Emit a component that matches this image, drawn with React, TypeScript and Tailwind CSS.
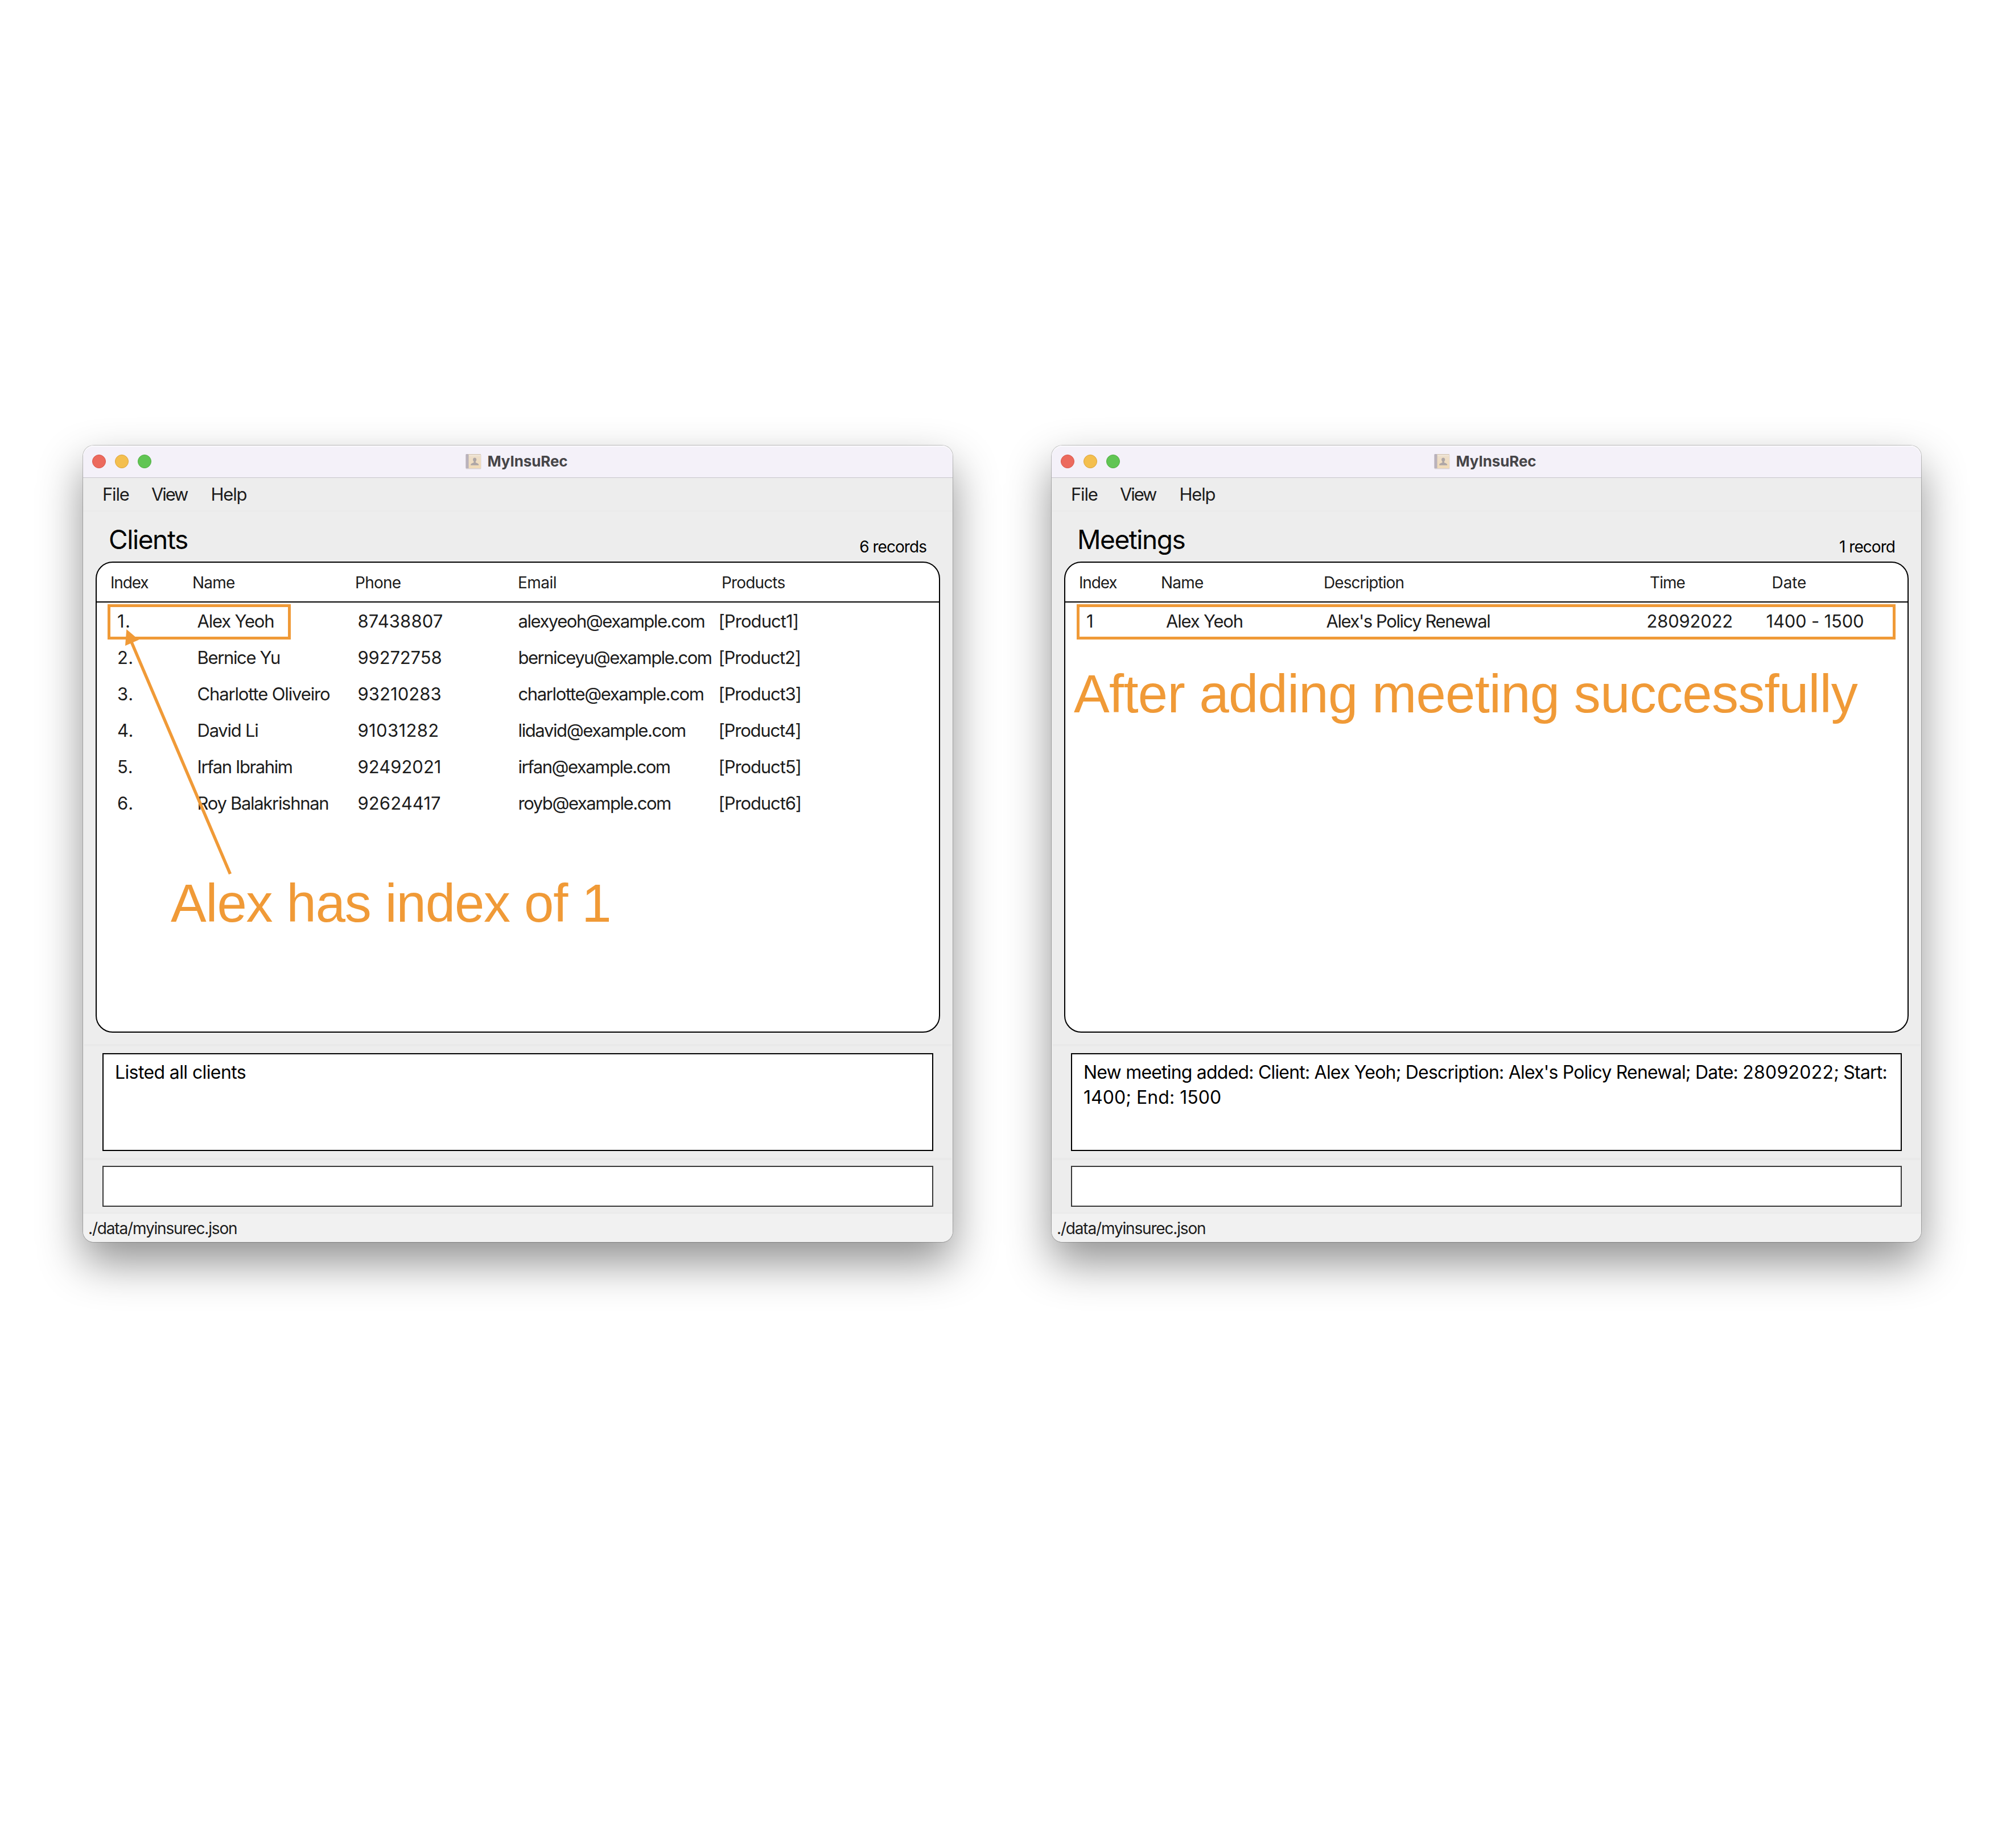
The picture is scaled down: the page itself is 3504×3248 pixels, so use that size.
import React, { type ReactNode } from "react";

type Cell = { text: string; track: string };

function BookIcon() {
  return (
    <svg width="28" height="28" viewBox="0 0 28 28" className="block">
      <defs>
        <linearGradient id="cover" x1="0" y1="0" x2="0" y2="1">
          <stop offset="0" stopColor="#ecdfcf" />
          <stop offset="1" stopColor="#f0dab6" />
        </linearGradient>
      </defs>
      <rect x="0.5" y="1.5" width="27" height="26" rx="1.5" fill="#d9d1d2" />
      <rect x="0.5" y="1" width="5" height="25" rx="1" fill="#b9b2bc" />
      <rect x="5" y="1" width="22" height="25" rx="1" fill="url(#cover)" />
      <rect x="5" y="1" width="22" height="1.4" fill="#d8cabb" />
      <rect x="6" y="3.2" width="20" height="1" fill="#f6eee2" />
      <rect x="5" y="2" width="1" height="24" fill="#cfc3b8" />
      <path
        d="M16.2 7.500c-2 0-3.1 1.400-3.1 3.300 0 1.600.7 2.700 1.500 3.500v1.800c-1.600.9-5.100 1.300-5.400 3.500v1.100h14v-1.100c-.3-2.200-3.800-2.600-5.400-3.500v-1.800c.8-.8 1.500-1.900 1.500-3.500 0-1.900-1.100-3.300-3.100-3.300z"
        fill="#aea6a6"
      />
    </svg>
  );
}

function TitleBar() {
  return (
    <div className="grid h-[57px] shrink-0 grid-cols-[1fr_auto_1fr] items-center rounded-t-[19px] border-b border-[#c8c5cb] bg-[#f4f1f9] px-4 shadow-[inset_0_2px_0_#faf9fc]">
      <div className="flex gap-4">
        <div className="size-6 rounded-full border border-[#d9564b] bg-[#ec6a5e]" />
        <div className="size-6 rounded-full border border-[#dca53c] bg-[#f4bf4f]" />
        <div className="size-6 rounded-full border border-[#50ae42] bg-[#61c554]" />
      </div>
      <div className="flex items-center gap-[10px] pr-1 pb-px">
        <BookIcon />
        <span className="text-[26px] leading-9 font-bold tracking-[-0.1px] text-[#464548]">MyInsuRec</span>
      </div>
    </div>
  );
}

function MenuBar() {
  return (
    <div className="flex h-[59px] shrink-0 items-center border-b-2 border-[#eaeaea] pt-[2px] pl-[34px] text-[31px] text-[#1c1c1c]">
      <span className="w-[86px] tracking-[-1.2px]">File</span>
      <span className="w-[104.5px] tracking-[-2.1px]">View</span>
      <span className="tracking-[-1.2px]">Help</span>
    </div>
  );
}

function Cells({ cells }: { cells: Cell[] }) {
  return (
    <>
      {cells.map((c) => (
        <span key={c.text} className={c.track}>
          {c.text}
        </span>
      ))}
    </>
  );
}

type WindowProps = {
  title: string;
  titleTrack: string;
  count: string;
  header: Cell[];
  headerCols: string;
  rows: Cell[][];
  rowCols: string;
  result: ReactNode;
  children: ReactNode;
};

function AppWindow({ title, titleTrack, count, header, headerCols, rows, rowCols, result, children }: WindowProps) {
  return (
    <section className="relative flex h-[1400px] w-[1528px] shrink-0 flex-col rounded-[19px] bg-[#ededed] whitespace-nowrap shadow-[0_0_0_1px_rgba(0,0,0,0.22),0_36px_78px_rgba(0,0,0,0.43)]">
      <TitleBar />
      <MenuBar />
      <header className="flex h-[88px] shrink-0 items-end justify-between pr-[46px] pl-[45px] text-black">
        <h1 className={`mb-[11px] text-[46px] leading-[56px] ${titleTrack}`}>{title}</h1>
        <span className="mb-2 text-[28px] leading-9 tracking-[-0.95px]">{count}</span>
      </header>
      <div className="mx-[22px] h-[828px] shrink-0 rounded-[30px] border-2 border-black bg-white text-[#1c1c1c]">
        <div className={`grid h-[70px] items-center border-b-2 border-black pt-[2px] pl-6 text-[28px] ${headerCols}`}>
          <Cells cells={header} />
        </div>
        <div className="pt-px">
          {rows.map((row, i) => (
            <div key={i} className={`grid h-16 items-center text-[31px] ${rowCols}`}>
              <Cells cells={row} />
            </div>
          ))}
        </div>
      </div>
      <div className="mx-[2px] mt-5 h-1 shrink-0 bg-[#e9e9e9]" />
      <div className="mx-[34px] mt-3 h-[172px] shrink-0 border-2 border-black bg-white pt-[10px] pl-5 text-[32px] leading-[44px] text-black shadow-[0_-2px_0_#e9e9e9]">
        {result}
      </div>
      <div className="mx-[2px] mt-3 h-1 shrink-0 bg-[#e9e9e9]" />
      <div className="mx-[34px] mt-[10px] h-[72px] shrink-0 border-2 border-[#383838] bg-white" />
      <footer className="mt-[10px] flex h-[52px] items-center rounded-b-[19px] border-t-2 border-[#e9e9e9] bg-[#f1f1f1] pt-[2px] pl-[9px] text-[28px] tracking-[-1.17px] text-[#1c1c1c]">
        ./data/myinsurec.json
      </footer>
      {children}
    </section>
  );
}

const clientHeader: Cell[] = [
  { text: "Index", track: "tracking-[-1.15px]" },
  { text: "Name", track: "tracking-[-0.75px]" },
  { text: "Phone", track: "tracking-[-0.75px]" },
  { text: "Email", track: "tracking-[-0.55px]" },
  { text: "Products", track: "tracking-[-0.85px]" },
];

const clientRows: Cell[][] = [
  [
    { text: "1.", track: "tracking-[1.3px]" },
    { text: "Alex Yeoh", track: "tracking-[-1.19px]" },
    { text: "87438807", track: "tracking-[0.13px]" },
    { text: "alexyeoh@example.com", track: "tracking-[-1.46px]" },
    { text: "[Product1]", track: "tracking-[-0.94px]" },
  ],
  [
    { text: "2.", track: "tracking-[0.4px]" },
    { text: "Bernice Yu", track: "tracking-[-1.36px]" },
    { text: "99272758", track: "tracking-[-0.14px]" },
    { text: "berniceyu@example.com", track: "tracking-[-1.51px]" },
    { text: "[Product2]", track: "tracking-[-1.19px]" },
  ],
  [
    { text: "3.", track: "tracking-[0.7px]" },
    { text: "Charlotte Oliveiro", track: "tracking-[-1.14px]" },
    { text: "93210283", track: "tracking-[0.07px]" },
    { text: "charlotte@example.com", track: "tracking-[-1.37px]" },
    { text: "[Product3]", track: "tracking-[-1.13px]" },
  ],
  [
    { text: "4.", track: "tracking-[0.5px]" },
    { text: "David Li", track: "tracking-[-1.23px]" },
    { text: "91031282", track: "tracking-[0.35px]" },
    { text: "lidavid@example.com", track: "tracking-[-1.38px]" },
    { text: "[Product4]", track: "tracking-[-1.2px]" },
  ],
  [
    { text: "5.", track: "tracking-[0.8px]" },
    { text: "Irfan Ibrahim", track: "tracking-[-1.4px]" },
    { text: "92492021", track: "tracking-[0.01px]" },
    { text: "irfan@example.com", track: "tracking-[-1.48px]" },
    { text: "[Product5]", track: "tracking-[-1.1px]" },
  ],
  [
    { text: "6.", track: "tracking-[1.1px]" },
    { text: "Roy Balakrishnan", track: "tracking-[-1.3px]" },
    { text: "92624417", track: "tracking-[0.1px]" },
    { text: "royb@example.com", track: "tracking-[-1.45px]" },
    { text: "[Product6]", track: "tracking-[-1.1px]" },
  ],
];

const meetingHeader: Cell[] = [
  { text: "Index", track: "tracking-[-1.15px]" },
  { text: "Name", track: "tracking-[-0.75px]" },
  { text: "Description", track: "tracking-[-0.95px]" },
  { text: "Time", track: "tracking-[-0.93px]" },
  { text: "Date", track: "tracking-[-0.07px]" },
];

const meetingRows: Cell[][] = [
  [
    { text: "1", track: "tracking-normal" },
    { text: "Alex Yeoh", track: "tracking-[-1.19px]" },
    { text: "Alex's Policy Renewal", track: "tracking-[-1.43px]" },
    { text: "28092022", track: "tracking-[-0.2px]" },
    { text: "1400 - 1500", track: "tracking-[-0.19px]" },
  ],
];

export default function App() {
  return (
    <main className="flex h-[3248px] w-[3504px] items-start gap-[174px] overflow-hidden bg-white pt-[783px] pl-[146px] font-['Inter',sans-serif]">
      <AppWindow
        title="Clients"
        titleTrack="tracking-[-1.4px]"
        count="6 records"
        header={clientHeader}
        headerCols="grid-cols-[144px_286px_286px_358px_1fr]"
        rows={clientRows}
        rowCols="pl-9 grid-cols-[140.5px_282px_282px_352px_1fr]"
        result={<p className="tracking-[-0.61px]">Listed all clients</p>}
      >
        <div className="absolute top-[279px] left-[43px] h-[62px] w-[322px] border-[5px] border-[#f09a37]" />
        <svg className="absolute top-[315px] left-[70px]" width="200" height="450" viewBox="0 0 200 450">
          <path d="M14 28L188.500 438" stroke="#f09a37" strokeWidth="5.4" fill="none" />
          <path d="M6.300 8L28 26.500L4 37z" fill="#f09a37" />
        </svg>
        <p className="absolute top-[755px] left-[154px] font-['Liberation_Sans',sans-serif] text-[94px] leading-[100px] tracking-[-1.1px] text-[#f09a37]">
          Alex has index of 1
        </p>
      </AppWindow>
      <AppWindow
        title="Meetings"
        titleTrack="tracking-[-1.48px]"
        count="1 record"
        header={meetingHeader}
        headerCols="grid-cols-[144px_286px_573px_214.5px_1fr]"
        rows={meetingRows}
        rowCols="pl-[37px] grid-cols-[140px_281.5px_563px_210px_1fr]"
        result={
          <>
            <p className="tracking-[-0.8px]">
              New meeting added: Client: Alex Yeoh; Description: Alex's Policy Renewal; Date:{" "}
              <span className="tracking-[0.25px]">28092022</span>; Start:
            </p>
            <p className="tracking-[0.05px]">1400; End: 1500</p>
          </>
        }
      >
        <div className="absolute top-[279px] left-[44px] h-[62px] w-[1439px] border-[5px] border-[#f09a37]" />
        <p className="absolute top-[387px] left-[39px] font-['Liberation_Sans',sans-serif] text-[94px] leading-[100px] tracking-[-0.7px] text-[#f09a37]">
          After adding meeting successfully
        </p>
      </AppWindow>
    </main>
  );
}
